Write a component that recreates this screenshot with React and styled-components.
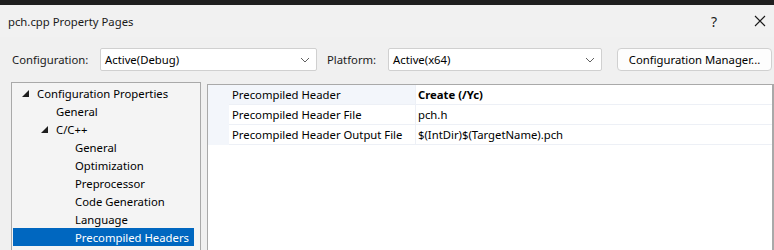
import React from 'react';
import styled, { createGlobalStyle } from 'styled-components';

const Global = createGlobalStyle`
  html, body { margin: 0; padding: 0; background: #f0f0f0; }
  body { font-family: "Noto Sans", "Open Sans", sans-serif; font-size: 11.3px; color: #000; overflow: hidden; }
`;

const tree = [
  { label: 'Configuration Properties', level: 0, open: true },
  { label: 'General', level: 1 },
  { label: 'C/C++', level: 1, open: true },
  { label: 'General', level: 2 },
  { label: 'Optimization', level: 2 },
  { label: 'Preprocessor', level: 2 },
  { label: 'Code Generation', level: 2 },
  { label: 'Language', level: 2 },
  { label: 'Precompiled Headers', level: 2, selected: true },
];

const props = [
  { name: 'Precompiled Header', value: 'Create (/Yc)', bold: true, shaded: true },
  { name: 'Precompiled Header File', value: 'pch.h' },
  { name: 'Precompiled Header Output File', value: '$(IntDir)$(TargetName).pch' },
];

const Chevron = () => (
  <svg width="10" height="6" viewBox="0 0 10 6">
    <path d="M1 1l4 4 4-4" fill="none" stroke="#606060" strokeWidth="1" />
  </svg>
);

const Arrow = () => (
  <svg width="7" height="7" viewBox="0 0 7 7">
    <path d="M7 0L7 7L0 7Z" fill="#1e1e1e" />
  </svg>
);

const App = () => {
  return (
    <>
      <Global />
      <Window>
        <TopStrip />
        <TitleBar>
          <Title>pch.cpp Property Pages</Title>
          <Caption>
            <CaptionButton $width={46}>?</CaptionButton>
            <CaptionButton $width={28}>
              <svg width="12" height="12" viewBox="0 0 12 12">
                <path d="M1 1l10 10M11 1L1 11" stroke="#1a1a1a" strokeWidth="1.1" />
              </svg>
            </CaptionButton>
          </Caption>
        </TitleBar>
        <Toolbar>
          <Label $width={88}>Configuration:</Label>
          <Combo $width={217}>
            <span>Active(Debug)</span>
            <Chevron />
          </Combo>
          <Label $gap={10} $width={61}>Platform:</Label>
          <Combo $width={214}>
            <span>Active(x64)</span>
            <Chevron />
          </Combo>
          <Button>Configuration Manager...</Button>
        </Toolbar>
        <Main>
          <TreePanel>
            {tree.map((item, i) => (
              <TreeRow key={i} $selected={item.selected}>
                <TreeInner $level={item.level}>
                  <Expander>{item.open && <Arrow />}</Expander>
                  {item.label}
                </TreeInner>
              </TreeRow>
            ))}
          </TreePanel>
          <GridPanel>
            <Gutter>
              {props.map((p, i) => (
                <PropRow key={i}>
                  <NameCell $shaded={p.shaded}>{p.name}</NameCell>
                  <ValueCell $bold={p.bold}>{p.value}</ValueCell>
                </PropRow>
              ))}
            </Gutter>
          </GridPanel>
        </Main>
      </Window>
    </>
  );
};

export default App;

const Window = styled.div`
  width: 774px;
  height: 250px;
  display: flex;
  flex-direction: column;
  overflow: hidden;
  & > * { flex-shrink: 0; }
`;

const TopStrip = styled.div`
  height: 5px;
  background: #1f1f1f;
`;

const TitleBar = styled.div`
  height: 32px;
  display: flex;
  align-items: center;
  justify-content: space-between;
  padding-left: 8px;
  background: #f1f1f1;
`;

const Title = styled.div`
  color: #1a1a1a;
`;

const Caption = styled.div`
  display: flex;
  align-items: center;
  gap: 9px;
`;

const CaptionButton = styled.div`
  width: ${(p) => p.$width}px;
  height: 32px;
  display: flex;
  align-items: center;
  justify-content: center;
  font-size: 14px;
  color: #1a1a1a;
`;

const Toolbar = styled.div`
  display: flex;
  align-items: center;
  padding: 11px 0 0 12px;
  white-space: nowrap;
`;

const Label = styled.div`
  margin-left: ${(p) => p.$gap || 0}px;
  width: ${(p) => p.$width}px;
  color: #1a1a1a;
`;

const Combo = styled.div`
  width: ${(p) => p.$width}px;
  height: 23px;
  box-sizing: border-box;
  background: #fff;
  border: 1px solid #d0d0d0;
  border-radius: 2px;
  display: flex;
  align-items: center;
  justify-content: space-between;
  padding: 0 6px 0 4px;
`;

const Button = styled.div`
  margin-left: 15px;
  width: 155px;
  height: 23px;
  box-sizing: border-box;
  background: #fdfdfd;
  border: 1px solid #d0d0d0;
  border-radius: 4px;
  display: flex;
  align-items: center;
  justify-content: center;
`;

const Main = styled.div`
  flex: 1;
  display: flex;
  align-items: flex-start;
  padding: 11px 0 0 11px;
  gap: 6px;
`;

const TreePanel = styled.div`
  width: 190px;
  height: 180px;
  box-sizing: border-box;
  border: 1px solid #a9a9a9;
  background: #f4f4f4;
  padding: 1px 6px 0 1px;
  white-space: nowrap;
`;

const TreeRow = styled.div`
  height: 18px;
  display: flex;
  align-items: center;
  background: ${(p) => (p.$selected ? '#0067c0' : 'transparent')};
  color: ${(p) => (p.$selected ? '#fff' : '#000')};
`;

const TreeInner = styled.div`
  display: flex;
  align-items: center;
  padding-left: ${(p) => 9 + p.$level * 19}px;
`;

const Expander = styled.span`
  width: 15px;
  display: flex;
  align-items: center;
`;

const GridPanel = styled.div`
  flex: 1;
  height: 180px;
  margin-top: 2px;
  box-sizing: border-box;
  border: 1px solid #a9a9a9;
  border-right-width: 2px;
  background: #fff;
  white-space: nowrap;
`;

const Gutter = styled.div`
  background: #f3f6fb;
  padding-left: 21px;
`;

const PropRow = styled.div`
  display: grid;
  grid-template-columns: 187px 1fr;
  height: 19px;
  border-bottom: 1px solid #edf0f6;
`;

const NameCell = styled.div`
  display: flex;
  align-items: center;
  padding-left: 3px;
  background: ${(p) => (p.$shaded ? '#f3f6fb' : '#fff')};
  border-right: 1px solid #edf0f6;
`;

const ValueCell = styled.div`
  display: flex;
  align-items: center;
  padding-left: 2px;
  background: #fff;
  font-weight: ${(p) => (p.$bold ? 700 : 400)};
`;
